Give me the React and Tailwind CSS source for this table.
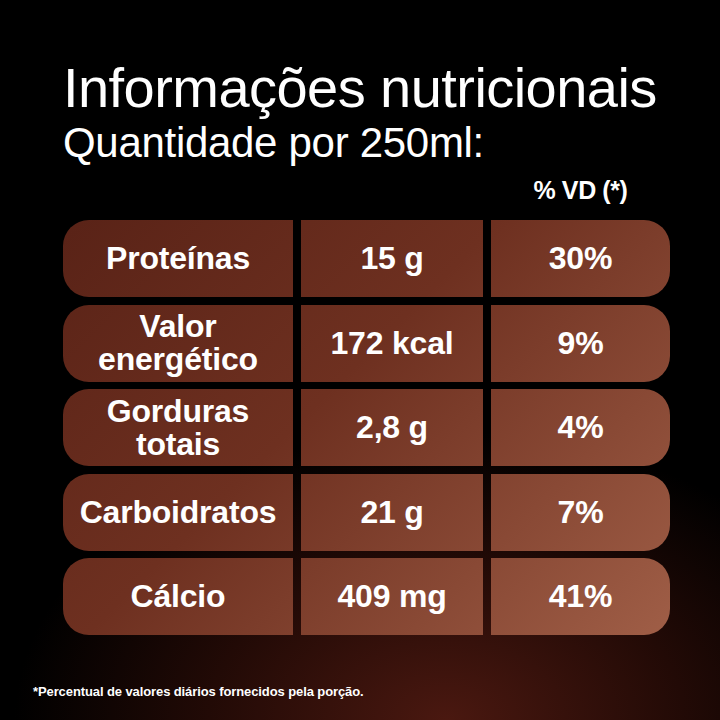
import React from "react";

const rows = [
  { name: ["Proteínas"], qty: "15 g", vd: "30%" },
  { name: ["Valor", "energético"], qty: "172 kcal", vd: "9%" },
  { name: ["Gorduras", "totais"], qty: "2,8 g", vd: "4%" },
  { name: ["Carboidratos"], qty: "21 g", vd: "7%" },
  { name: ["Cálcio"], qty: "409 mg", vd: "41%" },
];

const cell =
  "flex items-center justify-center text-center bg-fixed bg-linear-to-br from-[#4c1a11] via-[#6e3020] to-[#ab6950] text-white font-bold text-[32px] leading-[33px] tracking-[-0.2px]";

const App = () => {
  return (
    <div
      className="relative w-[720px] h-[720px] overflow-hidden bg-black"
      style={{ fontFamily: '"Liberation Sans", Arial, sans-serif' }}
    >
      {/* reddish glow at the bottom */}
      <div className="absolute inset-0 bg-[radial-gradient(ellipse_60%_40%_at_62%_100%,#4a1810_0%,#220a06_55%,transparent_100%)]" />

      <div className="relative flex flex-col pl-[63px] pt-[58px]">
        <h1 className="text-white text-[56px] leading-[60px] font-light tracking-[-0.55px]">
          Informações nutricionais
        </h1>
        <p className="text-white text-[42px] leading-[46px] tracking-[-0.3px] mt-[2px]">
          Quantidade por 250ml:
        </p>
        <div className="flex w-[607px] justify-end mt-[10px]">
          <span className="w-[179px] text-center text-white font-bold text-[25px] leading-[28px] tracking-[-0.4px]">
            % VD (*)
          </span>
        </div>

        <div className="grid grid-cols-[230px_182px_179px] gap-x-[8px] gap-y-[7.5px] mt-[16px] w-[607px]">
          {rows.map((r, i) => (
            <React.Fragment key={i}>
              <div className={`${cell} h-[77px] rounded-l-[26px] flex-col`}>
                {r.name.map((n, j) => (
                  <span key={j}>{n}</span>
                ))}
              </div>
              <div className={`${cell} h-[77px]`}>{r.qty}</div>
              <div className={`${cell} h-[77px] rounded-r-[26px]`}>{r.vd}</div>
            </React.Fragment>
          ))}
        </div>
      </div>

      <p className="absolute left-[33px] top-[682px] text-white text-[13px] font-bold tracking-[-0.1px]">
        *Percentual de valores diários fornecidos pela porção.
      </p>
    </div>
  );
};

export default App;
